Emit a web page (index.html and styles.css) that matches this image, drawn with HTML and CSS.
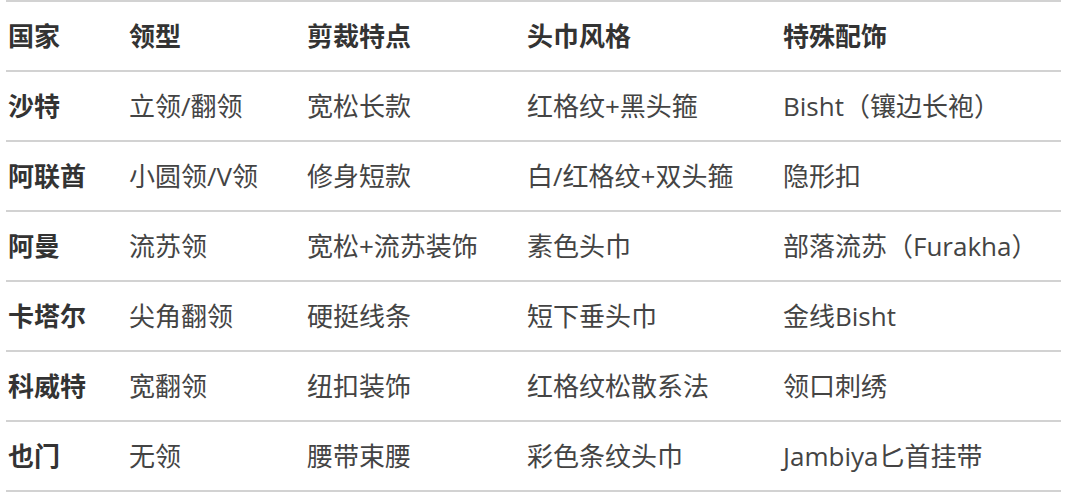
FILE: index.html
```html
<!DOCTYPE html>
<html lang="zh">
<head>
<meta charset="utf-8">
<link rel="stylesheet" href="styles.css">
</head>
<body>
<table class="tbl">
  <colgroup>
    <col class="c1"><col class="c2"><col class="c3"><col class="c4"><col class="c5">
  </colgroup>
  <thead>
    <tr><th>国家</th><th>领型</th><th>剪裁特点</th><th>头巾风格</th><th>特殊配饰</th></tr>
  </thead>
  <tbody>
    <tr><th>沙特</th><td>立领/翻领</td><td>宽松长款</td><td>红格纹+黑头箍</td><td>Bisht（镶边长袍）</td></tr>
    <tr><th>阿联酋</th><td>小圆领/V领</td><td>修身短款</td><td>白/红格纹+双头箍</td><td>隐形扣</td></tr>
    <tr><th>阿曼</th><td>流苏领</td><td>宽松+流苏装饰</td><td>素色头巾</td><td>部落流苏（Furakha）</td></tr>
    <tr><th>卡塔尔</th><td>尖角翻领</td><td>硬挺线条</td><td>短下垂头巾</td><td>金线Bisht</td></tr>
    <tr><th>科威特</th><td>宽翻领</td><td>纽扣装饰</td><td>红格纹松散系法</td><td>领口刺绣</td></tr>
    <tr><th>也门</th><td>无领</td><td>腰带束腰</td><td>彩色条纹头巾</td><td>Jambiya匕首挂带</td></tr>
  </tbody>
</table>
</body>
</html>
```
FILE: styles.css
```css
html, body {
  margin: 0;
  padding: 0;
  background: #ffffff;
}
body {
  font-family: "Open Sans", "Noto Sans CJK SC", sans-serif;
  color: #444444;
}
.tbl {
  margin-left: 6px;
  width: 1055px;
  border-collapse: collapse;
  table-layout: fixed;
  font-size: 26px;
}
.c1 { width: 121px; }
.c2 { width: 178px; }
.c3 { width: 220px; }
.c4 { width: 256px; }
.c5 { width: 280px; }
.tbl tr {
  height: 70px;
}
.tbl th, .tbl td {
  border-top: 2px solid #d2d2d2;
  border-bottom: 2px solid #d2d2d2;
  padding: 0 0 0 2px;
  text-align: left;
  vertical-align: middle;
  white-space: nowrap;
  line-height: 1;
}
.tbl th {
  font-weight: 700;
  color: #333333;
}
.tbl td {
  font-weight: 400;
}
```
